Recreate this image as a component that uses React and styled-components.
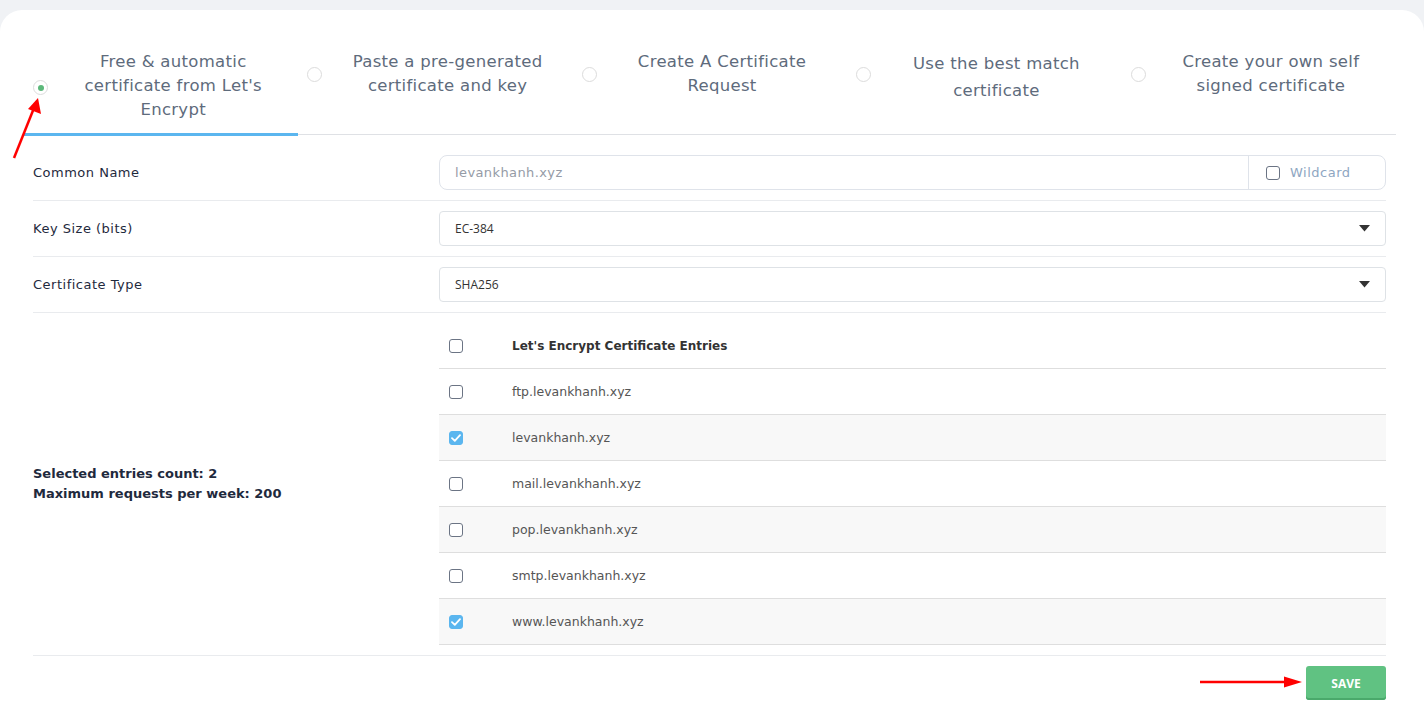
import React from 'react';
import styled, { createGlobalStyle } from 'styled-components';

const GlobalStyle = createGlobalStyle`
  html, body {
    margin: 0;
    padding: 0;
    background: #f0f2f5;
  }
  body {
    font-family: "DejaVu Sans", "Noto Sans", sans-serif;
  }
`;

const tabs = [
  { label: "Free & automatic certificate from Let's Encrypt", active: true },
  { label: 'Paste a pre-generated certificate and key' },
  { label: 'Create A Certificate Request' },
  { label: 'Use the best match certificate', lh: 27 },
  { label: 'Create your own self signed certificate' },
];

const entries = [
  { name: 'ftp.levankhanh.xyz', checked: false },
  { name: 'levankhanh.xyz', checked: true },
  { name: 'mail.levankhanh.xyz', checked: false },
  { name: 'pop.levankhanh.xyz', checked: false },
  { name: 'smtp.levankhanh.xyz', checked: false },
  { name: 'www.levankhanh.xyz', checked: true },
];

const Check = ({ checked }) => (
  <Box checked={checked}>
    {checked && (
      <svg width="10" height="8" viewBox="0 0 10 8">
        <path d="M1 4.2 L3.8 6.8 L9 1.2" fill="none" stroke="#fff" strokeWidth="1.8" strokeLinecap="round" strokeLinejoin="round" />
      </svg>
    )}
  </Box>
);

const Caret = () => (
  <svg width="11" height="7" viewBox="0 0 11 7">
    <path d="M0 0 H11 L5.5 6.5 Z" fill="#333" />
  </svg>
);

const App = () => {
  return (
    <>
      <GlobalStyle />
      <Card>
        <TabBar>
          {tabs.map((t) => (
            <Tab key={t.label} active={t.active}>
              <Radio active={t.active} />
              <TabText lh={t.lh}>{t.label}</TabText>
            </Tab>
          ))}
        </TabBar>

        <Form>
          <Row>
            <Label>Common Name</Label>
            <InputGroup>
              <TextInput>levankhanh.xyz</TextInput>
              <Addon>
                <Check />
                <span>Wildcard</span>
              </Addon>
            </InputGroup>
          </Row>
          <Row>
            <Label>Key Size (bits)</Label>
            <Select>
              <span>EC-384</span>
              <Caret />
            </Select>
          </Row>
          <Row>
            <Label>Certificate Type</Label>
            <Select>
              <span>SHA256</span>
              <Caret />
            </Select>
          </Row>
          <Row>
            <Summary>
              <div>Selected entries count: 2</div>
              <div>Maximum requests per week: 200</div>
            </Summary>
            <Table>
              <TableRow header>
                <CheckCell><Check /></CheckCell>
                <HeadText>Let's Encrypt Certificate Entries</HeadText>
              </TableRow>
              {entries.map((e, i) => (
                <TableRow key={e.name} striped={i % 2 === 1}>
                  <CheckCell><Check checked={e.checked} /></CheckCell>
                  <CellText>{e.name}</CellText>
                </TableRow>
              ))}
            </Table>
          </Row>
        </Form>

        <Footer>
          <SaveButton>SAVE</SaveButton>
        </Footer>

        <ArrowOverlay style={{ left: 8, top: 84 }} width="40" height="70" viewBox="0 0 40 70">
          <line x1="6" y1="64" x2="26" y2="14" stroke="#f00" strokeWidth="2.5" />
          <path d="M30 4 L33 20 L20 15 Z" fill="#f00" />
        </ArrowOverlay>
        <ArrowOverlay style={{ left: 1196, top: 662 }} width="110" height="20" viewBox="0 0 110 20">
          <line x1="4" y1="10" x2="92" y2="10" stroke="#f00" strokeWidth="2.5" />
          <path d="M106 10 L88 4.5 L88 15.5 Z" fill="#f00" />
        </ArrowOverlay>
      </Card>
    </>
  );
};

const Card = styled.div`
  position: relative;
  margin-top: 10px;
  background: #fff;
  border-radius: 22px 22px 0 0;
  padding: 0 28px 0 24px;
  min-height: 699px;
  box-sizing: border-box;
`;

const TabBar = styled.div`
  display: flex;
  border-bottom: 1px solid #dfe1e5;
`;

const Tab = styled.div`
  flex: 1;
  display: flex;
  align-items: flex-start;
  height: 126px;
  box-sizing: border-box;
  padding: 40px 0 0 9px;
  margin-bottom: -2px;
  border-bottom: 3px solid ${(p) => (p.active ? '#5bb6ef' : 'transparent')};
`;

const Radio = styled.span`
  flex: none;
  position: relative;
  width: 13px;
  height: 13px;
  border: 1px solid #dcdcdc;
  border-radius: 50%;
  margin-top: ${(p) => (p.active ? '30px' : '17px')};
  &::after {
    content: '';
    display: ${(p) => (p.active ? 'block' : 'none')};
    position: absolute;
    left: 3.5px;
    top: 3.5px;
    width: 6px;
    height: 6px;
    border-radius: 50%;
    background: #5cb87a;
  }
`;

const TabText = styled.div`
  flex: 1;
  text-align: center;
  font-size: 16.5px;
  letter-spacing: 0.3px;
  line-height: ${(p) => p.lh || 24}px;
  color: #5e6b7c;
  padding: 0 18px;
`;

const Form = styled.div`
  margin-top: 10px;
  padding: 0 10px 0 9px;
`;

const Row = styled.div`
  display: grid;
  grid-template-columns: 406px 1fr;
  align-items: center;
  padding: 10px 0;
  border-bottom: 1px solid #e9ebee;
`;

const Label = styled.div`
  font-size: 13px;
  letter-spacing: 0.5px;
  color: #1f2a3d;
`;

const InputGroup = styled.div`
  display: flex;
  height: 35px;
  border: 1px solid #dfe3ea;
  border-radius: 8px;
  box-sizing: border-box;
`;

const TextInput = styled.div`
  flex: 1;
  display: flex;
  align-items: center;
  padding-left: 15px;
  font-size: 13px;
  letter-spacing: 0.4px;
  color: #959ba6;
`;

const Addon = styled.div`
  width: 137px;
  display: flex;
  align-items: center;
  gap: 10px;
  padding-left: 17px;
  box-sizing: border-box;
  border-left: 1px solid #dfe3ea;
  font-size: 13px;
  letter-spacing: 0.5px;
  color: #8ea6c2;
`;

const Select = styled.div`
  height: 35px;
  box-sizing: border-box;
  display: flex;
  align-items: center;
  justify-content: space-between;
  padding: 0 15px;
  border: 1px solid #dee2e6;
  border-radius: 4px;
  font-family: "Open Sans", sans-serif;
  font-size: 12px;
  color: #333;
`;

const Summary = styled.div`
  font-size: 13px;
  font-weight: bold;
  color: #1f2a3d;
  line-height: 20px;
`;

const Table = styled.div`
  display: flex;
  flex-direction: column;
`;

const TableRow = styled.div`
  display: flex;
  align-items: center;
  height: 46px;
  box-sizing: border-box;
  border-bottom: 1px solid #dedede;
  background: ${(p) => (p.striped ? '#f8f8f8' : '#fff')};
`;

const CheckCell = styled.div`
  width: 73px;
  padding-left: 10px;
  box-sizing: border-box;
`;

const Box = styled.span`
  display: flex;
  align-items: center;
  justify-content: center;
  width: 14px;
  height: 14px;
  box-sizing: border-box;
  border-radius: 3px;
  border: 1px solid ${(p) => (p.checked ? '#5bb6ef' : '#6b7484')};
  background: ${(p) => (p.checked ? '#5bb6ef' : '#fff')};
`;

const HeadText = styled.div`
  font-size: 12px;
  font-weight: bold;
  color: #333;
`;

const CellText = styled.div`
  font-size: 12.5px;
  color: #555;
`;

const Footer = styled.div`
  display: flex;
  justify-content: flex-end;
  padding: 10px 10px 0 0;
`;

const SaveButton = styled.button`
  width: 80px;
  height: 34px;
  border: none;
  border-radius: 3px;
  background: #60c282;
  box-shadow: inset 0 -2px 0 #4aa96b;
  color: #fff;
  font-family: "Open Sans", sans-serif;
  font-weight: bold;
  font-size: 12px;
`;

const ArrowOverlay = styled.svg`
  position: absolute;
  pointer-events: none;
`;

export default App;
